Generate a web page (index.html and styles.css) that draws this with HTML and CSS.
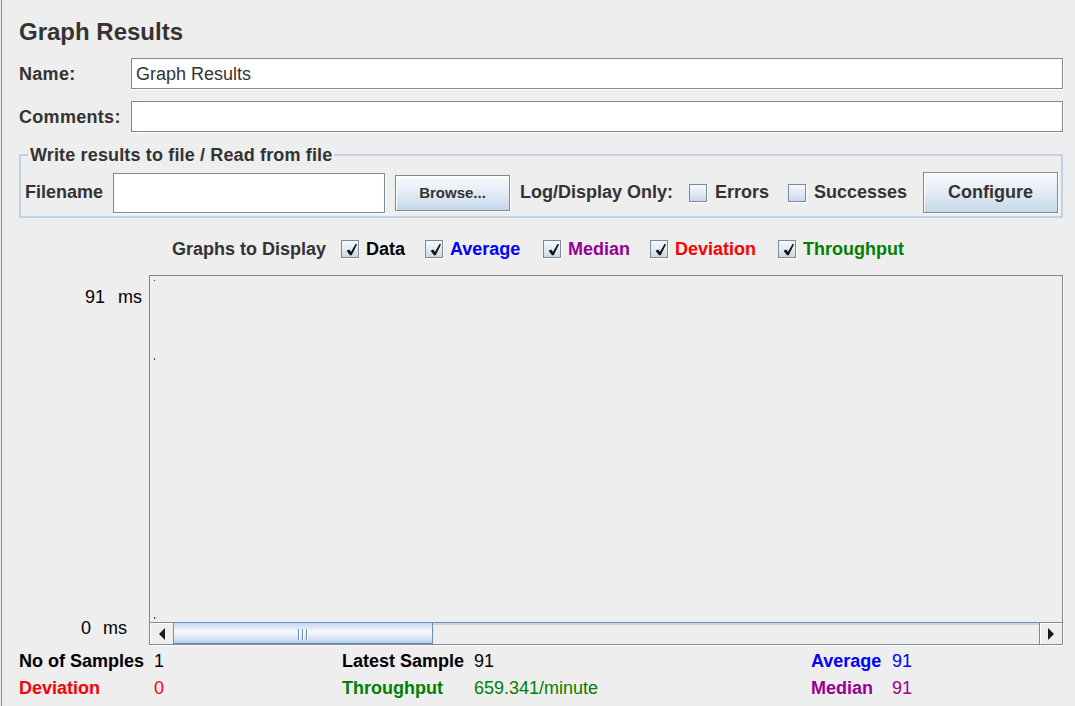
FILE: index.html
```html
<!DOCTYPE html>
<html lang="en">
<head>
<meta charset="utf-8">
<title>Graph Results</title>
<link rel="stylesheet" href="styles.css">
</head>
<body>
<div class="panel">
  <h1 class="title">Graph Results</h1>

  <div class="form-grid">
    <label class="field-label">Name:</label>
    <div class="text-input">Graph Results</div>
    <label class="field-label">Comments:</label>
    <div class="text-input"></div>
  </div>

  <fieldset class="file-box">
    <legend>Write results to file / Read from file</legend>
    <div class="file-row">
      <span class="lbl filename-label">Filename</span>
      <div class="text-input filename"></div>
      <button class="btn browse">Browse...</button>
      <span class="lbl log-label">Log/Display Only:</span>
      <span class="cb"></span><span class="lbl cb-text errors-text">Errors</span>
      <span class="cb"></span><span class="lbl cb-text">Successes</span>
      <button class="btn configure">Configure</button>
    </div>
  </fieldset>

  <div class="graphs-row">
    <span class="lbl graphs-label">Graphs to Display</span>
    <span class="opt opt-data">
      <span class="cb"><svg viewBox="0 0 16 16"><path d="M4.6 9.8 L7.4 8.6 L8.9 11 L13.7 2.8 L15 3.5 L9.7 14.3 L8 14.3 Z" fill="#111"/></svg></span>
      <span class="opt-text c-data">Data</span>
    </span>
    <span class="opt opt-average">
      <span class="cb"><svg viewBox="0 0 16 16"><path d="M4.6 9.8 L7.4 8.6 L8.9 11 L13.7 2.8 L15 3.5 L9.7 14.3 L8 14.3 Z" fill="#111"/></svg></span>
      <span class="opt-text c-average">Average</span>
    </span>
    <span class="opt opt-median">
      <span class="cb"><svg viewBox="0 0 16 16"><path d="M4.6 9.8 L7.4 8.6 L8.9 11 L13.7 2.8 L15 3.5 L9.7 14.3 L8 14.3 Z" fill="#111"/></svg></span>
      <span class="opt-text c-median">Median</span>
    </span>
    <span class="opt opt-deviation">
      <span class="cb"><svg viewBox="0 0 16 16"><path d="M4.6 9.8 L7.4 8.6 L8.9 11 L13.7 2.8 L15 3.5 L9.7 14.3 L8 14.3 Z" fill="#111"/></svg></span>
      <span class="opt-text c-deviation">Deviation</span>
    </span>
    <span class="opt opt-throughput">
      <span class="cb"><svg viewBox="0 0 16 16"><path d="M4.6 9.8 L7.4 8.6 L8.9 11 L13.7 2.8 L15 3.5 L9.7 14.3 L8 14.3 Z" fill="#111"/></svg></span>
      <span class="opt-text c-throughput">Throughput</span>
    </span>
  </div>

  <div class="graph-area">
    <div class="y-axis">
      <span class="y-max">91  ms</span>
      <span class="y-min">0  ms</span>
    </div>
    <div class="graph-box">
      <div class="plot">
        <span class="pt pt-median"></span>
        <span class="pt pt-throughput"></span>
        <span class="pt pt-deviation"></span>
      </div>
      <div class="hscroll">
        <span class="sb-btn sb-left"><i class="arrow-left"></i></span>
        <span class="sb-thumb"><i></i><i></i><i></i></span>
        <span class="sb-track"></span>
        <span class="sb-btn sb-right"><i class="arrow-right"></i></span>
      </div>
    </div>
  </div>

  <div class="stats">
    <b class="c-black">No of Samples</b><span class="c-black">1</span>
    <b class="c-black">Latest Sample</b><span class="c-black">91</span>
    <b class="c-average">Average</b><span class="c-average">91</span>

    <b class="c-deviation">Deviation</b><span class="c-deviation">0</span>
    <b class="c-throughput">Throughput</b><span class="c-throughput">659.341/minute</span>
    <b class="c-median">Median</b><span class="c-median">91</span>
  </div>
</div>
</body>
</html>
```

FILE: styles.css
```css
* { box-sizing: border-box; }

html, body {
  margin: 0;
  padding: 0;
}

body {
  width: 1075px;
  height: 706px;
  overflow: hidden;
  background: #eeeeee;
  font-family: "Liberation Sans", Arial, sans-serif;
  font-size: 18px;
  color: #333333;
}

.panel {
  height: 706px;
  margin-left: 1px;
  border-left: 1px solid #8e8e8e;
  padding: 0 12px 0 17px;
}

.title {
  margin: 0;
  height: 46px;
  padding-top: 18px;
  font-size: 24px;
  line-height: 28px;
  font-weight: bold;
  color: #333333;
}

/* name / comments */
.form-grid {
  display: grid;
  grid-template-columns: 112px 1fr;
  row-gap: 12px;
  align-items: center;
  margin-top: 12px;
}

.field-label {
  font-weight: bold;
  letter-spacing: 0.3px;
  padding-top: 1px;
}

.text-input {
  height: 31px;
  background: #ffffff;
  border: 1px solid #7a8a99;
  box-shadow: 1px 1px 0 #ffffff;
  padding: 1px 4px 0;
  line-height: 29px;
  color: #333333;
}

/* file box */
.file-box {
  margin: 13px 0 0;
  padding: 7px 3px 3px 4px;
  border: 2px solid #bfd2e6;
  min-width: 0;
}

.file-box legend {
  margin-left: 3px;
  padding: 0 2px;
  line-height: 20px;
  font-weight: bold;
  letter-spacing: 0.15px;
  color: #333333;
}

.file-row {
  display: flex;
  align-items: center;
  height: 41px;
}

.lbl { font-weight: bold; white-space: nowrap; }

.filename-label { width: 80px; }

.filename {
  width: 272px;
  height: 40px;
  margin-left: 8px;
}

.btn {
  font-family: "Liberation Sans", Arial, sans-serif;
  font-weight: bold;
  color: #333333;
  border: 1px solid #7a8a99;
  background: linear-gradient(to bottom, #f7fafd 0%, #e8eff7 40%, #c6d8eb 100%);
  box-shadow: inset 1px 1px 0 #ffffff, 1px 1px 0 #ffffff;
  padding: 0;
}

.browse {
  width: 115px;
  height: 36px;
  margin-left: 10px;
  font-size: 15px;
}

.configure {
  width: 135px;
  height: 41px;
  margin-left: auto;
  font-size: 18px;
}

.log-label {
  width: 169px;
  margin-left: 10px;
}

.cb {
  display: inline-flex;
  align-items: center;
  justify-content: center;
  flex: none;
  width: 18px;
  height: 18px;
  border: 1px solid #7a8a99;
  background: linear-gradient(to bottom, #f5f8fb 0%, #e3ebf4 50%, #c8d8ea 100%);
  box-shadow: 1px 1px 0 #ffffff;
}

.cb svg { width: 16px; height: 16px; display: block; }

.cb-text { margin-left: 8px; }
.errors-text { width: 73px; }

/* graph series toggles */
.graphs-row {
  display: flex;
  justify-content: center;
  align-items: center;
  height: 22px;
  margin-top: 20px;
  padding-right: 5px;
}

.graphs-label { width: 169px; }

.opt {
  display: inline-flex;
  align-items: center;
  flex: none;
}

.opt-data { width: 84px; }
.opt-average { width: 118px; }
.opt-median { width: 107px; }
.opt-deviation { width: 128px; }
.opt-throughput { width: 127px; }

.opt-text {
  margin-left: 7px;
  font-weight: bold;
  white-space: nowrap;
}

.c-black { color: #000000; }
.c-data { color: #000000; }
.c-average { color: #0000ff; }
.c-median { color: #960096; }
.c-deviation { color: #ff0000; }
.c-throughput { color: #008000; }

/* graph */
.graph-area {
  display: flex;
  margin-top: 15px;
  height: 370px;
}

.y-axis {
  width: 130px;
  flex: none;
  display: flex;
  flex-direction: column;
  justify-content: space-between;
  padding: 12px 0 7px;
  line-height: 20px;
  color: #000000;
  white-space: pre;
}

.y-max { padding-left: 66px; word-spacing: 1.5px; }
.y-min { padding-left: 62px; word-spacing: 1px; }

.graph-box {
  flex: 1;
  display: flex;
  flex-direction: column;
  border: 1px solid #7a8a99;
  box-shadow: 1px 1px 0 #ffffff;
  background: #eeeeee;
}

.plot {
  position: relative;
  flex: 1;
}

.pt {
  position: absolute;
  width: 1px;
  left: 4px;
}

.pt-median { top: 4px; height: 1px; background: #960096; }
.pt-throughput { top: 82px; height: 2px; background: #008000; }
.pt-deviation { top: 341px; height: 2px; background: #ff0000; }

/* horizontal scrollbar */
.hscroll {
  display: flex;
  height: 22px;
  flex: none;
  border-top: 1px solid #7a8a99;
}

.sb-btn {
  display: flex;
  align-items: center;
  justify-content: center;
  flex: none;
  width: 23px;
  background: #eeeeee;
  box-shadow: inset 1px 1px 0 #ffffff;
}

.sb-right {
  width: 23px;
  border-left: 1px solid #7a8a99;
}

.arrow-left {
  width: 0;
  height: 0;
  border-top: 6px solid transparent;
  border-bottom: 6px solid transparent;
  border-right: 6px solid #1a1a1a;
}

.arrow-right {
  width: 0;
  height: 0;
  border-top: 6px solid transparent;
  border-bottom: 6px solid transparent;
  border-left: 6px solid #1a1a1a;
}

.sb-thumb {
  flex: none;
  width: 260px;
  height: 22px;
  margin-top: -1px;
  display: flex;
  align-items: center;
  justify-content: center;
  gap: 2px;
  border: 1px solid #6d8cc6;
  background: linear-gradient(to bottom, #c4d6ee 0%, #f4f8fd 40%, #e9f0f9 60%, #bcd0ea 100%);
}

.sb-thumb i {
  display: block;
  width: 2px;
  height: 11px;
  margin-top: 3px;
  border-left: 1px solid #6d8cc6;
  border-right: 1px solid #ffffff;
}

.sb-track {
  flex: 1;
  background: #eeeeee;
  box-shadow: inset 0 2px 0 #c6d6e9;
}

/* summary figures */
.stats {
  display: grid;
  grid-template-columns: 135px 188px 132px 337px 81px 1fr;
  margin-top: 3px;
  line-height: 27px;
  white-space: nowrap;
}

.stats b { font-weight: bold; }
```
